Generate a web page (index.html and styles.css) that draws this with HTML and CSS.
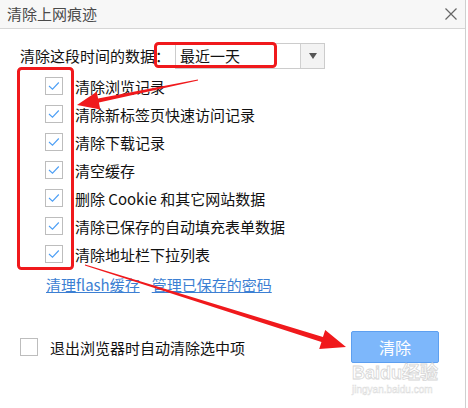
FILE: index.html
```html
<!DOCTYPE html>
<html lang="zh-CN">
<head>
  <meta charset="UTF-8" />
  <title>清除上网痕迹</title>
  <link rel="stylesheet" href="styles.css">
</head>
<body>
  <div class="dialog">
    <div class="titlebar">
      <span class="title">清除上网痕迹</span>
      <svg class="close" width="12" height="12" viewBox="0 0 12 12">
        <path d="M0.5 0.5 L11.5 11.5 M11.5 0.5 L0.5 11.5" stroke="#666" stroke-width="1.2" fill="none" />
      </svg>
    </div>

    <div class="content">
      <div class="range">
        <span class="range-label">清除这段时间的数据：</span>
        <div class="select">
          <span class="select-value">最近一天</span>
          <span class="select-btn">
            <svg width="8" height="6" viewBox="0 0 8 6"><path d="M0 0 H8 L4 6 Z" fill="#555" /></svg>
          </span>
        </div>
      </div>

      <ul class="options">
        <li class="option"><span class="check"><svg width="18" height="18" viewBox="0 0 18 18"><path d="M4 9 L7.5 12.2 L13.8 5.5" stroke="#4d9ff5" stroke-width="1.1" fill="none" /></svg></span>清除浏览记录</li>
        <li class="option"><span class="check"><svg width="18" height="18" viewBox="0 0 18 18"><path d="M4 9 L7.5 12.2 L13.8 5.5" stroke="#4d9ff5" stroke-width="1.1" fill="none" /></svg></span>清除新标签页快速访问记录</li>
        <li class="option"><span class="check"><svg width="18" height="18" viewBox="0 0 18 18"><path d="M4 9 L7.5 12.2 L13.8 5.5" stroke="#4d9ff5" stroke-width="1.1" fill="none" /></svg></span>清除下载记录</li>
        <li class="option"><span class="check"><svg width="18" height="18" viewBox="0 0 18 18"><path d="M4 9 L7.5 12.2 L13.8 5.5" stroke="#4d9ff5" stroke-width="1.1" fill="none" /></svg></span>清空缓存</li>
        <li class="option"><span class="check"><svg width="18" height="18" viewBox="0 0 18 18"><path d="M4 9 L7.5 12.2 L13.8 5.5" stroke="#4d9ff5" stroke-width="1.1" fill="none" /></svg></span>删除 Cookie 和其它网站数据</li>
        <li class="option"><span class="check"><svg width="18" height="18" viewBox="0 0 18 18"><path d="M4 9 L7.5 12.2 L13.8 5.5" stroke="#4d9ff5" stroke-width="1.1" fill="none" /></svg></span>清除已保存的自动填充表单数据</li>
        <li class="option"><span class="check"><svg width="18" height="18" viewBox="0 0 18 18"><path d="M4 9 L7.5 12.2 L13.8 5.5" stroke="#4d9ff5" stroke-width="1.1" fill="none" /></svg></span>清除地址栏下拉列表</li>
      </ul>

      <div class="links">
        <a href="#">清理flash缓存</a>
        <a href="#">管理已保存的密码</a>
      </div>

      <div class="footer">
        <span class="check"></span>
        <span class="footer-label">退出浏览器时自动清除选中项</span>
        <button class="clear-btn">清除</button>
      </div>
    </div>

    <!-- annotations drawn over the dialog -->
    <svg class="annot" width="468" height="408" viewBox="0 0 468 408">
      <rect x="155.5" y="43.5" width="120" height="23" rx="3" fill="none" stroke="#f0191c" stroke-width="3" />
      <rect x="18.5" y="68.5" width="54" height="200" rx="3" fill="none" stroke="#f0191c" stroke-width="3" />
      <polygon points="197.9,79.5 98.1,98.6 96.7,91.8 77,105 100.3,109.4 98.9,102.6 198.1,80.5" fill="#f0191c" />
      <polygon points="85.15,264.5 322.95,337.1 325.2,330 346,347 319.2,349 321.45,341.9 84.85,265.5" fill="#f0191c" />
      <text class="mark" x="352" y="379">Baidu经验</text>
      <text class="mark-url" x="352" y="393">jingyan.baidu.com</text>
    </svg>
  </div>
</body>
</html>
```

FILE: styles.css
```css
body {
  margin: 0;
  background: #fff;
  font-family: "Noto Sans CJK SC", "Liberation Sans", sans-serif;
  color: #111;
}

.dialog {
  position: relative;
  width: 465px;
  height: 408px;
  border-right: 1px solid #cfcfcf;
  overflow: hidden;
}

.titlebar {
  height: 28px;
  background: #f7f7f7;
  border-bottom: 1px solid #d6d6d6;
  display: flex;
  align-items: center;
  justify-content: space-between;
  padding: 0 8px 0 7px;
}

.title {
  font-size: 15px;
  line-height: 20px;
  color: #4a4a4a;
}

.content {
  padding: 0 26px 0 20px;
}

.range {
  display: flex;
  align-items: center;
  margin-top: 14px;
  height: 26px;
}

.range-label {
  font-size: 15px;
  line-height: 20px;
  width: 155px;
}

.select {
  display: flex;
  width: 148px;
  height: 24px;
  border: 1px solid #ccc;
}

.select-value {
  flex: 1;
  font-size: 15px;
  line-height: 24px;
  padding-left: 4px;
}

.select-btn {
  width: 23px;
  background: #f3f3f3;
  border-left: 1px solid #d0d0d0;
  display: flex;
  align-items: center;
  justify-content: center;
}

.options {
  list-style: none;
  margin: 3px 0 0;
  padding: 0 0 0 25px;
}

.option {
  display: flex;
  align-items: center;
  height: 28px;
  font-size: 15px;
  gap: 12px;
}

.check {
  width: 16px;
  height: 16px;
  border: 1px solid #bdbdbd;
  display: flex;
  align-items: center;
  justify-content: center;
  flex-shrink: 0;
}

.check svg {
  margin: -1px;
}

.links {
  margin-top: 7px;
  padding-left: 26px;
  display: flex;
  gap: 12px;
  font-size: 15px;
  line-height: 20px;
}

.links a {
  color: #3c7fd3;
  text-decoration: underline;
}

.footer {
  display: flex;
  align-items: center;
  margin-top: 36px;
  height: 32px;
}

.footer-label {
  font-size: 15px;
  margin-left: 12px;
}

.clear-btn {
  margin-left: auto;
  width: 88px;
  height: 32px;
  background: #7db7fb;
  border: 1px solid #5d9ff0;
  border-radius: 2px;
  color: #fff;
  font-family: inherit;
  font-size: 16px;
  padding: 0;
}

.annot {
  position: absolute;
  left: 0;
  top: 0;
  pointer-events: none;
}

.mark {
  font-family: "Liberation Sans", "Noto Sans CJK SC", sans-serif;
  font-size: 18px;
  font-weight: bold;
  fill: #fff;
  stroke: #d6d6d6;
  stroke-width: 0.8;
}

.mark-url {
  font-family: "Liberation Sans", sans-serif;
  font-size: 10px;
  fill: #fff;
  stroke: #dcdcdc;
  stroke-width: 0.5;
}
```
